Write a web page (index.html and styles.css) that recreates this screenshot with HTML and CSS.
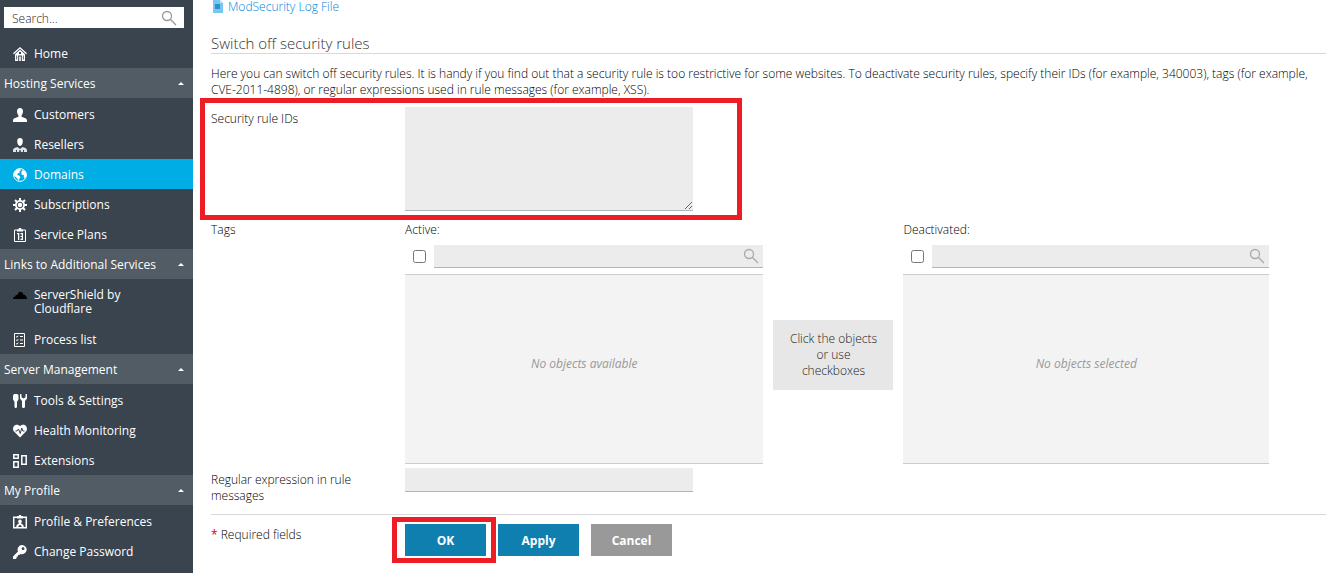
FILE: index.html
```html
<!DOCTYPE html>
<html lang="en">
<head>
  <meta charset="UTF-8" />
  <meta name="viewport" content="width=device-width, initial-scale=1.0" />
  <title>Web Application Firewall</title>
  <link rel="stylesheet" href="styles.css">
</head>
<body>
  <aside class="sidebar">
    <form class="sidebar-search">
      <input type="text" placeholder="Search..." aria-label="Search">
      <button type="submit" aria-label="Search">
        <svg width="16" height="16" viewBox="0 0 16 16" class="glass"><circle cx="6" cy="6" r="4.5"></circle><path d="M9.3 9.3L15 15"></path></svg>
      </button>
    </form>

    <nav>
      <ul>
        <li><a href="#">
          <svg width="14" height="14" viewBox="0 0 14 14"><path d="M7 0L0 6.2l.8 1L7 1.8l6.2 5.4.8-1z"></path><path fill-rule="evenodd" d="M7 2.8L2 7.2V14h3.200V8.500h3.600V14H12V7.200zM6 5h2v2H6zM3.300 8.500h.8v4h-.8zM9.900 8.500h.8v4h-.8z"></path><path d="M6.200 9.500h1.600V14H6.200z"></path></svg>
          Home</a></li>
      </ul>

      <h2><a href="#">Hosting Services</a></h2>
      <ul>
        <li><a href="#">
          <svg width="14" height="14" viewBox="0 0 14 14"><path d="M7 0c2 0 3 1.300 3 3.200 0 1.800-.6 3-1.400 3.900v1.700c.8.8 5.400 1 5.400 3.600V14H0v-1.600c0-2.600 4.600-2.800 5.400-3.600V7.100C4.600 6.200 4 5 4 3.200 4 1.300 5 0 7 0z"></path></svg>
          Customers</a></li>
        <li><a href="#">
          <svg width="14" height="14" viewBox="0 0 14 14"><path d="M7 0c1.800 0 2.800 1.200 2.800 3C9.800 5.800 8.700 8 7 8S4.200 5.800 4.200 3c0-1.800 1-3 2.800-3z"></path><path d="M4.500 9L7 11l2.500-2c2 .8 4.500 1 4.500 3.500V14H8l-.6-2h-.8L6 14H0v-1.500C0 10 2.500 9.800 4.500 9z" opacity=".85"></path><path d="M3 12h1v2H3zM10 12h1v2h-1z" class="cut"></path></svg>
          Resellers</a></li>
        <li class="active"><a href="#">
          <svg width="14" height="14" viewBox="0 0 14 14"><circle cx="7" cy="7" r="6.4" class="line"></circle><path d="M1 5C2 2.500 4 1 7 .8l1 1.400-1.500 1 .3 1.300-1.800.8L4 7l2 .5 1.500 1.700-1.200 1.500-.3 2.300C5 11.500 3.500 9 1 8zM9.300 2.200l2 .3C13 4 13.800 6 13.200 8.500l-1.500 2-1-1.800.3-1.500-2.200-.5-.6-2z"></path></svg>
          Domains</a></li>
        <li><a href="#">
          <svg width="14" height="14" viewBox="0 0 14 14"><path d="M7 0v14M0 7h14M2 2l10 10M12 2L2 12" class="line teeth"></path><circle cx="7" cy="7" r="5"></circle><circle cx="7" cy="7" r="2.8" class="ring"></circle><circle cx="7" cy="7" r="1.2"></circle></svg>
          Subscriptions</a></li>
        <li><a href="#">
          <svg width="14" height="14" viewBox="0 0 14 14"><path d="M4 2H1.500v11.500h11V2H10" class="line"></path><path d="M4 1.200h1.800V0h2.400v1.200H10v2.300H4zM4 5h2.300v7H5V6.200H4zM7.500 5H10v7H7.500v-1.200h1.300V9H7.500V8h1.300V6.200H7.500z"></path></svg>
          Service Plans</a></li>
      </ul>

      <h2><a href="#">Links to Additional Services</a></h2>
      <ul>
        <li class="tall"><a href="#">
          <svg width="14" height="14" viewBox="0 0 14 14" class="cloud"><path d="M0 11c0-1.600.8-2.400 2.200-2.500C2.200 7.200 3.600 6.700 4.400 7.200 5.200 3 9.300 2.500 10.300 6.500c2.300.3 3.500 2 3.700 4.500z"></path></svg>
          <span>ServerShield by Cloudflare</span></a></li>
        <li><a href="#">
          <svg width="14" height="14" viewBox="0 0 14 14"><path d="M1.500.5h10v13h-10zM3.200 3.500l.8.8 1.200-1.600M3.200 7l.8.8 1.200-1.600M3.200 10.500l.8.8 1.200-1.600M7 3.500h3M7 7h3M7 10.500h3" class="line"></path></svg>
          Process list</a></li>
      </ul>

      <h2><a href="#">Server Management</a></h2>
      <ul>
        <li><a href="#">
          <svg width="14" height="14" viewBox="0 0 14 14"><path d="M1 0h3.500L5.500 1.500v4L4 7.800V13l-.8 1h-1L1.500 13V7.800L0 5.500v-4z"></path><path d="M7 0l1.500.2v3L10.500 4.500l2-1.300v-3L14 0v4.500L12 7v6l-.8 1H9.800L9 13V7L7 4.500z"></path></svg>
          Tools &amp; Settings</a></li>
        <li><a href="#">
          <svg width="14" height="14" viewBox="0 0 14 14"><path d="M7 2.200C8.500.2 11.500.2 13 2c1.500 1.900 1.100 4.200-.3 5.700L7 13.500 1.300 7.700C-.1 6.200-.5 3.900 1 2 2.500.2 5.500.2 7 2.200z"></path><path d="M2.500 7H4l1.500-2 1.700 4.500L8.800 4l1 3h1.700" class="ring"></path></svg>
          Health Monitoring</a></li>
        <li><a href="#">
          <svg width="14" height="14" viewBox="0 0 14 14"><path d="M.8.8h4.400v3.400H.8zM.8 7.800h4.400v5.400H.8zM8.800 1.800h4.400v8.400H8.800z" class="line bold"></path></svg>
          Extensions</a></li>
      </ul>

      <h2><a href="#">My Profile</a></h2>
      <ul>
        <li><a href="#">
          <svg width="14" height="14" viewBox="0 0 14 14"><path d="M.7 2.200h12.600v10.500H.7z" class="line bold"></path><path d="M4 1h2V0h2v1h2v2.500H4zM7 4.500c2.200 0 2.200 3 .9 4 1.800.5 2.900 1.500 2.900 3.500H9l-1.500-2h-1L5 12H3.200c0-2 1.100-3 2.900-3.500-1.300-1-1.300-4 .9-4z"></path></svg>
          Profile &amp; Preferences</a></li>
        <li><a href="#">
          <svg width="14" height="14" viewBox="0 0 14 14"><path fill-rule="evenodd" d="M9 0a4.600 4.600 0 1 1-1.600 8.900L6.200 10H5v1.500H3.700V13L2.500 14H0v-2.500l5-5A4.600 4.600 0 0 1 9 0zM10 2.200a1.400 1.400 0 1 0 .1 2.800A1.400 1.400 0 0 0 10 2.200z"></path></svg>
          Change Password</a></li>
      </ul>
    </nav>
  </aside>

  <main>
    <a href="#" class="log-link">
      <svg width="10" height="14" viewBox="0 0 10 14"><path d="M0 0h7l3 3v10H0z" fill="#76c8f2"></path><path d="M7 0l3 3H7z" fill="#c5e8fa"></path><path d="M2 4h5v5H2z" fill="#2a93cf"></path></svg>
      ModSecurity Log File
    </a>

    <h1>Switch off security rules</h1>
    <p class="description">Here you can switch off security rules. It is handy if you find out that a security rule is too restrictive for some websites. To deactivate security rules, specify their IDs (for example, 340003), tags (for example, CVE-2011-4898), or regular expressions used in rule messages (for example, XSS).</p>

    <form>
      <div class="row rule-ids">
        <label for="rule-ids">Security rule IDs</label>
        <textarea id="rule-ids"></textarea>
      </div>

      <div class="row tags">
        <span class="label">Tags</span>
        <div class="transfer">
          <section>
            <h3>Active:</h3>
            <div class="filter">
              <input type="checkbox" aria-label="Select all active">
              <div class="filter-box">
                <input type="text" aria-label="Search active tags">
                <svg width="16" height="16" viewBox="0 0 16 16" class="glass"><circle cx="6" cy="6" r="4.5"></circle><path d="M9.3 9.3L15 15"></path></svg>
              </div>
            </div>
            <div class="list">No objects available</div>
          </section>
          <div class="hint">Click the objects or use checkboxes</div>
          <section>
            <h3>Deactivated:</h3>
            <div class="filter">
              <input type="checkbox" aria-label="Select all deactivated">
              <div class="filter-box">
                <input type="text" aria-label="Search deactivated tags">
                <svg width="16" height="16" viewBox="0 0 16 16" class="glass"><circle cx="6" cy="6" r="4.5"></circle><path d="M9.3 9.3L15 15"></path></svg>
              </div>
            </div>
            <div class="list">No objects selected</div>
          </section>
        </div>
      </div>

      <div class="row regex">
        <label for="regex">Regular expression in rule messages</label>
        <input type="text" id="regex">
      </div>

      <div class="row actions">
        <span class="label"><span class="required">*</span> Required fields</span>
        <div class="buttons">
          <span class="marked"><button type="submit">OK</button></span>
          <button type="button">Apply</button>
          <button type="button" class="cancel">Cancel</button>
        </div>
      </div>
    </form>
  </main>
</body>
</html>
```

FILE: styles.css
```css
:root {
  --sidebar-bg: #39444f;
  --sidebar-header: #515c64;
  --active: #00ade5;
  --primary: #0f7fb0;
  --field-bg: #ececec;
  --field-border: #abb6be;
  --mark: #ee1c25;
}

*, *::before, *::after {
  box-sizing: border-box;
}

body {
  display: flex;
  min-height: 100vh;
  margin: 0;
  background-color: #fff;
  color: #000;
  font: 300 12px/16px "Open Sans", sans-serif;
}

h1, h2, h3, p, ul {
  margin: 0;
  padding: 0;
  font-weight: inherit;
}

a {
  text-decoration: none;
}

input, textarea, button {
  border: 0;
  border-radius: 0;
  font: inherit;
}

textarea,
input[type="text"] {
  background-color: var(--field-bg);
}

.glass {
  fill: none;
  stroke: #999;
  stroke-width: 1.3;
}

.sidebar {
  flex: 0 0 193px;
  min-width: 0;
  padding-top: 7px;
  background-color: var(--sidebar-bg);
}

.sidebar-search {
  display: flex;
  align-items: center;
  height: 21px;
  margin: 0 9px 10px 4px;
  background-color: #fff;
}

.sidebar-search input[type="text"] {
  flex: 1;
  min-width: 0;
  padding: 2px 8px 0;
  background: none;
}

.sidebar-search input::placeholder {
  color: #222;
}

.sidebar-search button {
  display: flex;
  padding: 0 7px;
  background: none;
}

.sidebar ul {
  list-style: none;
}

.sidebar h2 + ul {
  padding-top: 1px;
}

.sidebar nav a {
  display: flex;
  align-items: center;
  min-height: 30px;
  padding: 1px 9px 0 4px;
  color: #fff;
  font-weight: 400;
}

.sidebar nav li a {
  gap: 7px;
  padding-left: 13px;
}

.sidebar li svg {
  flex: none;
  fill: #fff;
}

.sidebar svg .line {
  fill: none;
  stroke: #fff;
}

.sidebar svg .bold {
  stroke-width: 1.5;
}

.sidebar svg .teeth {
  stroke-width: 2;
}

.sidebar svg .ring {
  fill: none;
  stroke: var(--sidebar-bg);
}

.sidebar svg .cut {
  fill: var(--sidebar-bg);
}

.sidebar li .cloud {
  fill: #000;
}

.sidebar .active {
  background-color: var(--active);
}

.sidebar nav .tall a {
  align-items: flex-start;
  min-height: 44px;
  padding: 8px 50px 0 13px;
  line-height: 14px;
}

.sidebar h2 {
  background-color: var(--sidebar-header);
  font-size: 12px;
}

.sidebar h2 a {
  justify-content: space-between;
}

.sidebar h2 a::after {
  content: "";
  border: 3px solid transparent;
  border-top: 0;
  border-bottom-color: #fff;
}

main {
  flex: 1;
  min-width: 0;
  padding: 0 15px 0 18px;
}

.log-link {
  display: flex;
  align-items: center;
  gap: 5px;
  height: 14px;
  padding-left: 2px;
  color: #0085db;
}

h1 {
  margin-top: 20px;
  border-bottom: 1px solid #d9d9d9;
  color: #333;
  font-size: 15px;
  line-height: 19px;
}

.description {
  margin: 12px 0 9px;
}

.row {
  display: grid;
  grid-template-columns: 194px 1fr;
}

.row > label,
.row > .label {
  padding-right: 40px;
}

.rule-ids {
  position: relative;
  padding-bottom: 11px;
}

.rule-ids label {
  padding-top: 4px;
}

/* highlight frame around the rule IDs field */
.rule-ids::before {
  content: "";
  position: absolute;
  top: -9px;
  bottom: 2px;
  left: -11px;
  width: 542px;
  border: 5px solid var(--mark);
  pointer-events: none;
}

textarea {
  width: 288px;
  height: 104px;
  border-bottom: 1px solid var(--field-border);
  resize: both;
}

.transfer {
  display: grid;
  grid-template-columns: 358fr 120px 365fr;
  gap: 10px;
  padding-right: 57px;
}

.transfer h3 {
  font-size: 12px;
}

.filter {
  display: flex;
  align-items: center;
  margin: 7px 0 6px;
}

.filter input[type="checkbox"] {
  width: 13px;
  height: 13px;
  margin: 0 8px;
}

.filter-box {
  display: flex;
  flex: 1;
  align-items: center;
  height: 23px;
  padding-right: 4px;
  border-bottom: 1px solid var(--field-border);
  background-color: var(--field-bg);
}

.filter-box input {
  flex: 1;
  min-width: 0;
}

.filter-box .glass {
  stroke: #aaa;
}

.list {
  display: flex;
  align-items: center;
  justify-content: center;
  height: 190px;
  padding-bottom: 10px;
  border: 1px solid #ccc;
  border-width: 1px 0;
  background-color: #f3f3f3;
  color: #999;
  font-style: italic;
  font-weight: 400;
}

.hint {
  align-self: start;
  margin-top: 98px;
  padding: 11px 14px;
  background-color: #e7e7e7;
  color: #222;
  text-align: center;
}

.regex {
  margin-top: 4px;
}

.regex label {
  padding-top: 4px;
}

.regex input {
  width: 288px;
  height: 24px;
  border-bottom: 1px solid var(--field-border);
}

.actions {
  margin-top: 10px;
  padding-top: 9px;
  border-top: 1px solid #d9d9d9;
}

.actions .label {
  padding-top: 3px;
}

.required {
  color: #e0001b;
  font-weight: 400;
}

.buttons {
  display: flex;
  gap: 12px;
}

.buttons button {
  width: 81px;
  height: 32px;
  padding-top: 2px;
  background-color: var(--primary);
  color: #fff;
  font-weight: 700;
  cursor: pointer;
}

.buttons .cancel {
  background-color: #999;
}

.marked {
  position: relative;
}

/* highlight frame around the OK button */
.marked::before {
  content: "";
  position: absolute;
  inset: -7px -10px -7px -13px;
  border: 5px solid var(--mark);
  pointer-events: none;
}
```
